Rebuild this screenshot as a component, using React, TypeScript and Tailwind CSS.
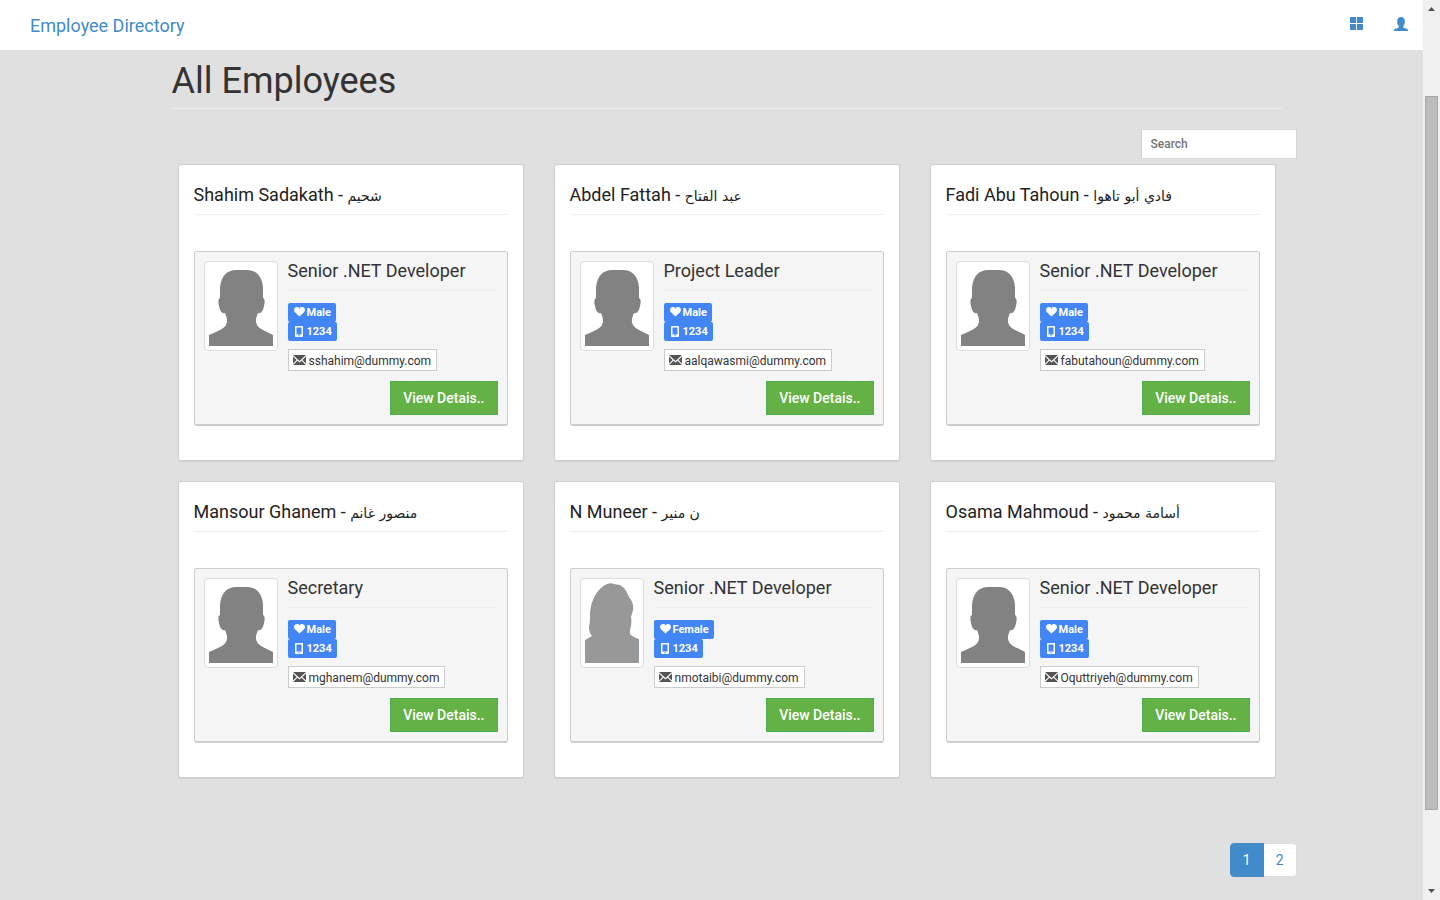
type Employee = {
  id: number
  name: string
  arabicName: string
  title: string
  gender: "Male" | "Female"
  phone: string
  email: string
}

const EMPLOYEES: Employee[] = [
  {
    id: 1,
    name: "Shahim Sadakath",
    arabicName: "شحيم",
    title: "Senior .NET Developer",
    gender: "Male",
    phone: "1234",
    email: "sshahim@dummy.com",
  },
  {
    id: 2,
    name: "Abdel Fattah",
    arabicName: "عبد الفتاح",
    title: "Project Leader",
    gender: "Male",
    phone: "1234",
    email: "aalqawasmi@dummy.com",
  },
  {
    id: 3,
    name: "Fadi Abu Tahoun",
    arabicName: "فادي أبو تاهوا",
    title: "Senior .NET Developer",
    gender: "Male",
    phone: "1234",
    email: "fabutahoun@dummy.com",
  },
  {
    id: 4,
    name: "Mansour Ghanem",
    arabicName: "منصور غانم",
    title: "Secretary",
    gender: "Male",
    phone: "1234",
    email: "mghanem@dummy.com",
  },
  {
    id: 5,
    name: "N Muneer",
    arabicName: "ن منير",
    title: "Senior .NET Developer",
    gender: "Female",
    phone: "1234",
    email: "nmotaibi@dummy.com",
  },
  {
    id: 6,
    name: "Osama Mahmoud",
    arabicName: "أسامة محمود",
    title: "Senior .NET Developer",
    gender: "Male",
    phone: "1234",
    email: "Oquttriyeh@dummy.com",
  },
]

function GridIcon() {
  return (
    <svg className="h-[14px] w-[14px]" viewBox="0 0 14 14" fill="currentColor" aria-hidden="true">
      <path d="M0 0h6v6H0zM7 0h6v6H7zM0 7h6v6H0zM7 7h6v6H7z" />
    </svg>
  )
}

function UserIcon() {
  return (
    <svg className="h-[14px] w-[14px]" viewBox="0 0 14 14" fill="currentColor" aria-hidden="true">
      <path d="M7 0C4.600 0 3.300 1.400 3.300 3.500v1.400c-.3.400-.2 1.100.1 1.700.3 1.100.8 1.800 1.400 2.400v.8c0 .6-.4.900-.9 1.100l-2.500.9C.4 12.200 0 12.800 0 14h14c0-1.200-.4-1.800-1.400-2.200l-2.500-.9c-.5-.2-.9-.5-.9-1.100V9c.6-.6 1.100-1.300 1.400-2.400.3-.6.400-1.300.1-1.700V3.500C10.700 1.400 9.400 0 7 0z" />
    </svg>
  )
}

function HeartIcon() {
  return (
    <svg className="h-[10px] w-[11px]" viewBox="0 0 11 10" fill="currentColor" aria-hidden="true">
      <path d="M5.500 1.500C4.700-.1 2.700-.4 1.300.6-.2 1.700-.4 3.700.9 5.200L5.500 9.600l4.600-4.400c1.300-1.500 1.100-3.500-.4-4.600C8.300-.4 6.300-.1 5.500 1.500z" />
    </svg>
  )
}

function PhoneIcon() {
  return (
    <svg className="h-[11px] w-[11px]" viewBox="0 0 11 11" fill="currentColor" aria-hidden="true">
      <path
        fillRule="evenodd"
        d="M2 0h6c.6 0 1 .4 1 1v9c0 .6-.4 1-1 1H2c-.6 0-1-.4-1-1V1c0-.6.4-1 1-1zM2.500 1.500V8.500h5v-7zM4.300 9.300v.9h1.400v-.9z"
      />
    </svg>
  )
}

function EnvelopeIcon() {
  return (
    <svg className="h-[10px] w-[13px]" viewBox="0 0 13 10" fill="currentColor" aria-hidden="true">
      <path d="M0 0h13L6.500 6zM0 1.600l3.700 3.400L0 8.400zM13 1.600v6.800L9.300 5zM4.500 5.700l2 1.800 2-1.800L13 10H0z" />
    </svg>
  )
}

function Avatar({ gender }: { gender: Employee["gender"] }) {
  if (gender === "Female") {
    return (
      <svg className="h-20 w-[54px]" viewBox="0 0 54 80" role="img" aria-label="Female employee">
        <path
          fill="#989898"
          d="M0 80V57l7-4c-2-2-3-5-3-9 1-5 1-9 1-14C6 16 13 5 22 1c3-1 5-1 7 0l6 1c5 3 7 7 9 12 3 4 5 8 4 13l-2 7c1 5 0 9-1 13v4c3 3 6 4 9 5v24z"
        />
      </svg>
    )
  }

  return (
    <svg className="h-20 w-16" viewBox="0 0 64 80" role="img" aria-label="Male employee">
      <path
        fill="#828282"
        d="M0 80V69c6-3 14-5 17-10 2-4 1-7-1-12-3 1-5-2-6-7-1-4-1-7 1-8V22C12 10 18 4 27 4h11c9 0 15 6 16 17v11c2 1 2 4 1 8-1 5-3 8-6 7-2 5-3 8-1 12 3 5 11 7 16 10v11z"
      />
    </svg>
  )
}

function EmployeeCard({ employee }: { employee: Employee }) {
  return (
    <li className="rounded-[3px] border border-b-2 border-[#cfcfcf] bg-white px-[15px] pt-5 pb-[34px]">
      <h2 className="mb-9 border-b border-[#eeeeee] pb-[9px] text-[18px] leading-5 text-[#222222]">
        {employee.name} -{" "}
        <span lang="ar" dir="rtl" className="font-['DejaVu_Sans',sans-serif] text-[14px] leading-none">
          {employee.arabicName}
        </span>
      </h2>

      <div className="flex gap-[10px] rounded-[3px] border border-b-2 border-[#cccccc] bg-[#f5f5f5] p-[9px]">
        <div className="shrink-0 self-start rounded-[4px] border border-[#dddddd] bg-white p-1">
          <Avatar gender={employee.gender} />
        </div>

        <div className="flex min-w-0 flex-1 flex-col items-start">
          <h3 className="mb-3 w-full border-b border-[#eeeeee] pb-[9px] text-[18px] leading-5 text-[#333333]">
            {employee.title}
          </h3>
          <span className="flex h-[19px] items-center gap-[2px] rounded-[2px] bg-[#4285f4] pt-[2px] pr-[5px] pl-[6px] text-[11px] font-bold text-white">
            <span className="pb-[3px]">
              <HeartIcon />
            </span>
            {employee.gender}
          </span>
          <span className="flex h-[19px] items-center gap-[2px] rounded-[2px] bg-[#4285f4] pt-[2px] pr-[5px] pl-[6px] text-[11px] font-bold text-white">
            <span className="pb-[3px]">
              <PhoneIcon />
            </span>
            {employee.phone}
          </span>
          <a
            href={`mailto:${employee.email}`}
            className="mt-2 flex h-[22px] items-center gap-[3px] border border-[#cccccc] bg-white pt-[2px] pr-[5px] pl-1 text-[12px] text-[#333333]"
          >
            <span className="pb-[3px] text-[#555555]">
              <EnvelopeIcon />
            </span>
            {employee.email}
          </a>
          <button
            type="button"
            className="mt-[10px] h-[34px] self-end border border-[#4cae4c] bg-[#64b145] px-3 text-[14px] font-medium text-white"
          >
            View Detais..
          </button>
        </div>
      </div>
    </li>
  )
}

function Navbar() {
  return (
    <nav className="flex h-[50px] items-center justify-between bg-white pr-[15px] pl-[30px] text-[#428bca]">
      <a href="#" className="pt-[2px] text-[18px] leading-5">
        Employee Directory
      </a>
      <div className="flex items-center gap-[30px] pb-[2px]">
        <a href="#" aria-label="Dashboard">
          <GridIcon />
        </a>
        <a href="#" aria-label="Account">
          <UserIcon />
        </a>
      </div>
    </nav>
  )
}

function Pagination() {
  return (
    <div className="flex justify-end text-[14px] leading-5">
      <a
        href="#"
        aria-current="page"
        className="rounded-l-[4px] border border-[#428bca] bg-[#428bca] px-3 py-[6px] text-white"
      >
        1
      </a>
      <a href="#" className="rounded-r-[4px] border border-l-0 border-[#dddddd] bg-white px-3 py-[6px] text-[#428bca]">
        2
      </a>
    </div>
  )
}

function ScrollRail() {
  return (
    <div className="sticky top-0 flex h-screen w-[17px] shrink-0 flex-col items-center bg-[#f0f0f0] py-[7px]" aria-hidden="true">
      <svg className="h-1 w-[7px]" viewBox="0 0 7 4" fill="#505050">
        <path d="M3.500 0L7 4H0z" />
      </svg>
      <div className="grow-[85]" />
      <div className="w-[13px] grow-[714] border border-[#a8a8a8] bg-[#bcbcbc]" />
      <div className="grow-[79]" />
      <svg className="h-1 w-[7px]" viewBox="0 0 7 4" fill="#505050">
        <path d="M3.500 4L0 0h7z" />
      </svg>
    </div>
  )
}

export default function App() {
  return (
    <div className="flex min-h-screen bg-[#e0e0e0] font-[Roboto,'DejaVu_Sans',sans-serif]">
      <div className="min-w-0 flex-1">
        <Navbar />

        <main className="mx-auto max-w-[1170px] pt-[11px]">
          <h1 className="mr-[15px] ml-[45px] border-b border-[#eeeeee] pb-[7px] text-[36px] leading-10 text-[#333333]">
            All Employees
          </h1>

          <div className="mt-5 flex justify-end">
            <input
              type="search"
              aria-label="Search"
              placeholder="Search"
              className="h-[30px] w-[156px] border border-[#d5d5d5] bg-white px-[9px] text-[12px] font-medium placeholder:text-[#757575]"
            />
          </div>

          <ul className="mt-[5px] mr-[21px] ml-[51px] grid grid-cols-3 gap-x-[30px] gap-y-[19px]">
            {EMPLOYEES.map((employee) => (
              <EmployeeCard key={employee.id} employee={employee} />
            ))}
          </ul>

          <div className="mt-16">
            <Pagination />
          </div>
        </main>
      </div>

      <ScrollRail />
    </div>
  )
}
